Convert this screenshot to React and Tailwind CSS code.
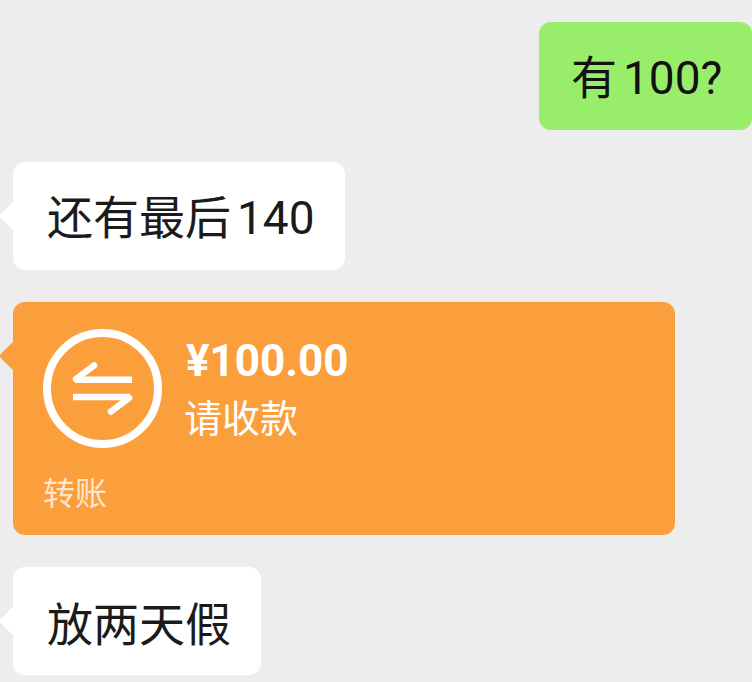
const cjk = '"Noto Sans CJK SC", sans-serif';

const Tail = ({ className }) => (
  <span className={`absolute left-[-10px] top-[44px] w-[20px] h-[20px] rotate-45 rounded-[2px] ${className}`} />
);

const Num = ({ children }) => (
  <span className="ml-[6px] text-[46px] font-normal" style={{ fontFamily: '"Roboto", sans-serif' }}>
    {children}
  </span>
);

const Bubble = ({ children }) => (
  <div className="relative self-start h-[108px] pl-[34px] pr-[30px] flex items-center bg-white rounded-[12px] ml-[13px] text-[46px] text-[#1b1b1b]">
    <Tail className="bg-white" />
    <span className="relative">{children}</span>
  </div>
);

export default function App() {
  return (
    <div
      className="w-[752px] h-[682px] overflow-hidden bg-[#ededed] flex flex-col pt-[22px] gap-[32px]"
      style={{ fontFamily: cjk }}
    >
      <div className="self-end w-[213px] h-[108px] pl-[32px] flex items-center bg-[#98ee6b] rounded-[12px] text-[46px] text-[#111]">
        <span>有<Num>100?</Num></span>
      </div>
      <Bubble>还有最后<Num>140</Num></Bubble>
      <div className="relative self-start w-[662px] h-[233px] ml-[13px] bg-[#fb9f3c] rounded-[12px] text-white">
        <Tail className="bg-[#fb9f3c]" />
        <div className="relative flex items-start pl-[30px] pt-[27px] gap-[24px]">
          <svg width="119" height="119" viewBox="0 0 119 119" fill="none" stroke="#fff">
            <circle cx="59.5" cy="59.5" r="55.5" strokeWidth="8" />
            <path d="M89 50.7 H32" strokeWidth="6.5" />
            <path d="M33 50 L51 36.5" strokeWidth="6.5" strokeLinecap="round" />
            <path d="M30 68 H87" strokeWidth="6.5" />
            <path d="M86 69 L68 82.5" strokeWidth="6.5" strokeLinecap="round" />
          </svg>
          <div className="flex flex-col pt-[4px]">
            <span className="text-[44px] leading-[56px] font-bold" style={{ fontFamily: '"Roboto", sans-serif' }}>
              ¥100.00
            </span>
            <span className="text-[38px] leading-[54px] ml-[-2px]">请收款</span>
          </div>
        </div>
        <div className="pl-[30px] mt-[23px] text-[32px] leading-[40px] text-[#ffe6cc]">转账</div>
      </div>
      <Bubble>放两天假</Bubble>
    </div>
  );
}
